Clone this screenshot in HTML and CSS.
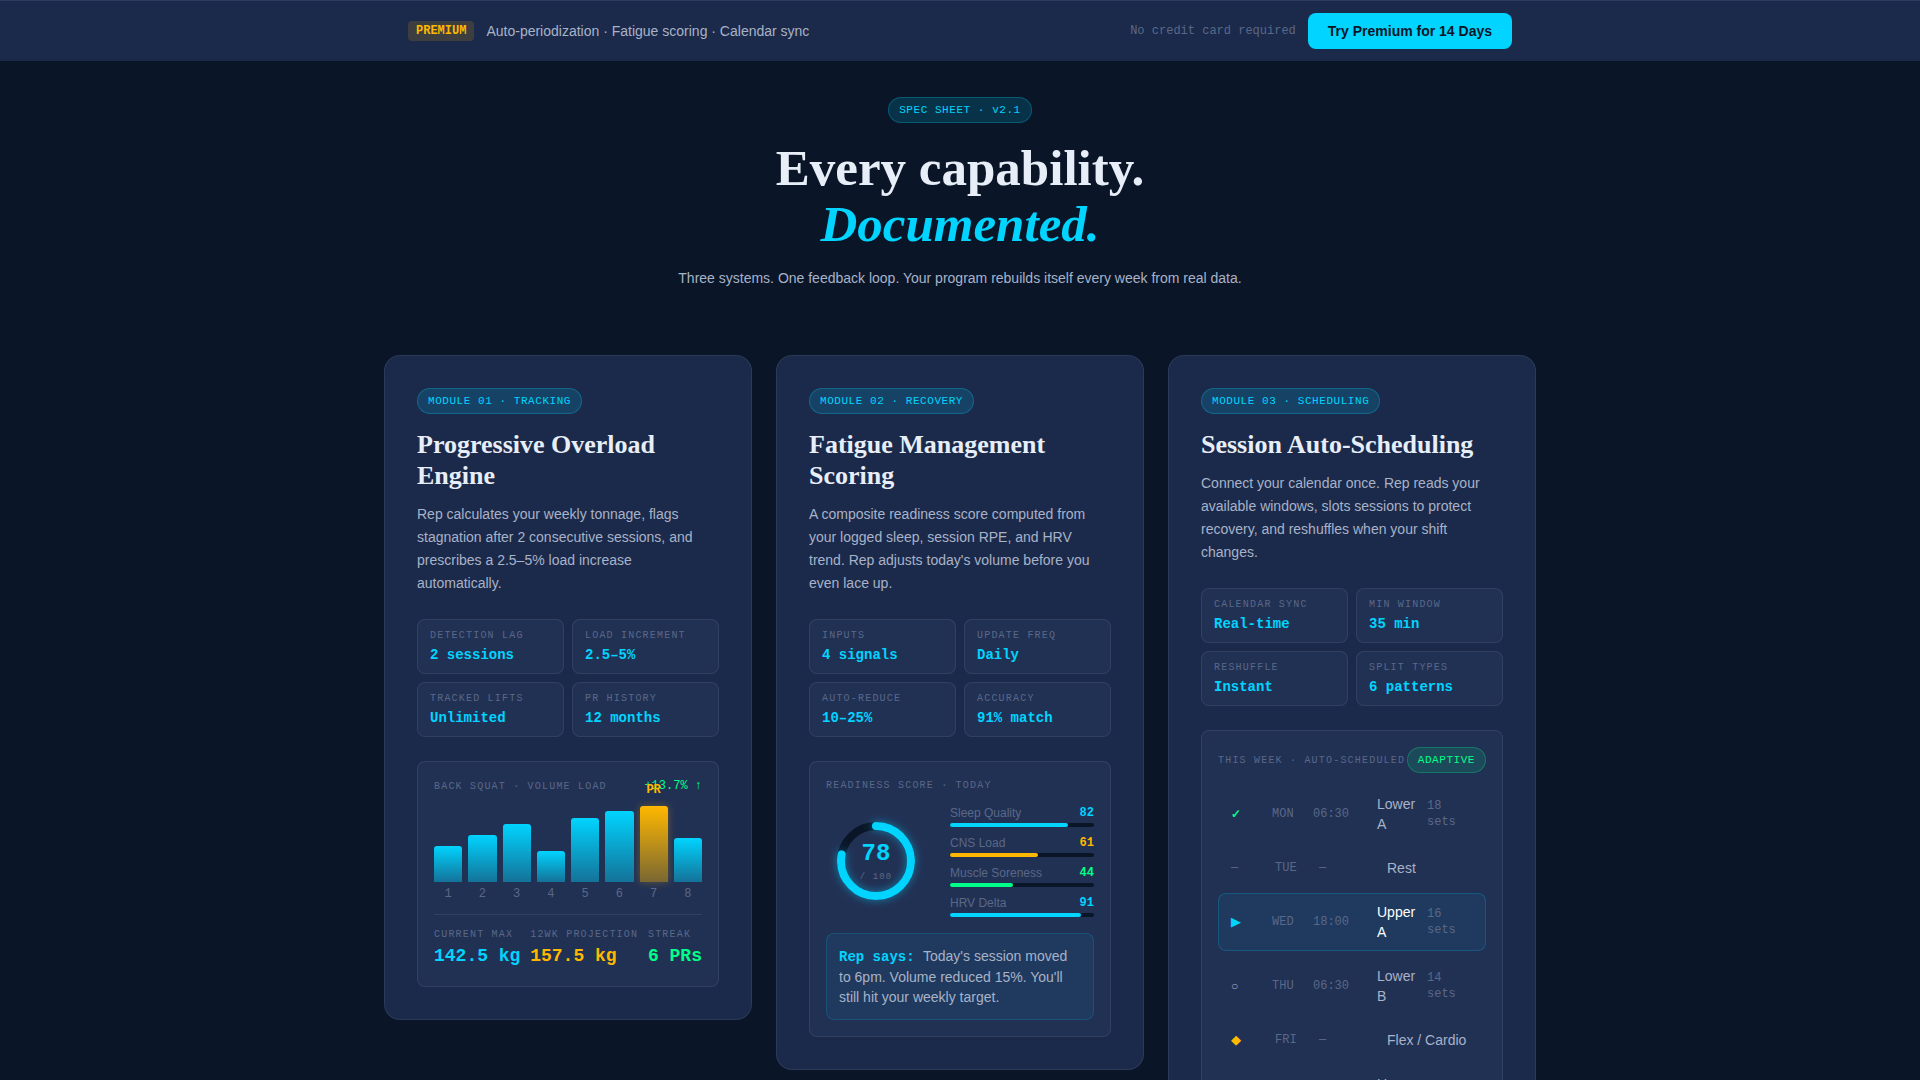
FILE: index.html
```html
<!DOCTYPE html>
<html lang="en">
<head>
<meta charset="utf-8">
<meta name="viewport" content="width=device-width, initial-scale=1">
<title>Rep – Spec Sheet</title>
<link rel="stylesheet" href="styles.css">
</head>
<body>
<header class="promo">
  <div class="promo-inner">
    <div class="promo-group">
      <span class="promo-tag">PREMIUM</span>
      <span class="promo-text">Auto-periodization · Fatigue scoring · Calendar sync</span>
    </div>
    <div class="promo-group">
      <span class="promo-note">No credit card required</span>
      <button class="cta" type="button">Try Premium for 14 Days</button>
    </div>
  </div>
</header>

<main>
  <section class="hero">
    <span class="pill">SPEC SHEET · v2.1</span>
    <h1 class="hero-title">Every capability.<br><em>Documented.</em></h1>
    <p class="hero-text">Three systems. One feedback loop. Your program rebuilds itself every week from real data.</p>
  </section>

  <section class="modules">
    <article class="card">
      <span class="pill">MODULE 01 · TRACKING</span>
      <h2 class="card-title">Progressive Overload Engine</h2>
      <p class="card-text">Rep calculates your weekly tonnage, flags stagnation after 2 consecutive sessions, and prescribes a 2.5–5% load increase automatically.</p>
      <dl class="specs">
        <div class="spec"><dt class="label">DETECTION LAG</dt><dd>2 sessions</dd></div>
        <div class="spec"><dt class="label">LOAD INCREMENT</dt><dd>2.5–5%</dd></div>
        <div class="spec"><dt class="label">TRACKED LIFTS</dt><dd>Unlimited</dd></div>
        <div class="spec"><dt class="label">PR HISTORY</dt><dd>12 months</dd></div>
      </dl>
      <div class="panel">
        <div class="chart-head">
          <span class="label">BACK SQUAT · VOLUME LOAD</span>
          <span class="trend">+13.7% ↑</span>
        </div>
        <div class="chart">
          <div class="bar" style="height:45%"></div>
          <div class="bar" style="height:59%"></div>
          <div class="bar" style="height:72%"></div>
          <div class="bar" style="height:39%"></div>
          <div class="bar" style="height:80%"></div>
          <div class="bar" style="height:89%"></div>
          <div class="bar bar-pr" style="height:95%"><span class="pr">PR</span></div>
          <div class="bar" style="height:55%"></div>
        </div>
        <div class="weeks"><span>1</span><span>2</span><span>3</span><span>4</span><span>5</span><span>6</span><span>7</span><span>8</span></div>
        <dl class="stats">
          <div><dt class="label">CURRENT MAX</dt><dd class="cyan">142.5 kg</dd></div>
          <div><dt class="label">12WK PROJECTION</dt><dd class="amber">157.5 kg</dd></div>
          <div><dt class="label">STREAK</dt><dd class="green">6 PRs</dd></div>
        </dl>
      </div>
    </article>

    <article class="card">
      <span class="pill">MODULE 02 · RECOVERY</span>
      <h2 class="card-title">Fatigue Management Scoring</h2>
      <p class="card-text">A composite readiness score computed from your logged sleep, session RPE, and HRV trend. Rep adjusts today's volume before you even lace up.</p>
      <dl class="specs">
        <div class="spec"><dt class="label">INPUTS</dt><dd>4 signals</dd></div>
        <div class="spec"><dt class="label">UPDATE FREQ</dt><dd>Daily</dd></div>
        <div class="spec"><dt class="label">AUTO-REDUCE</dt><dd>10–25%</dd></div>
        <div class="spec"><dt class="label">ACCURACY</dt><dd>91% match</dd></div>
      </dl>
      <div class="panel">
        <div class="label">READINESS SCORE · TODAY</div>
        <div class="readiness">
          <div class="ring">
            <svg class="ring-svg" viewBox="0 0 100 100" width="100" height="100" aria-hidden="true">
              <circle class="ring-track" cx="50" cy="50" r="35"/>
              <circle class="ring-value" cx="50" cy="50" r="35" pathLength="100" stroke-dasharray="78 100" transform="rotate(-90 50 50)"/>
            </svg>
            <div class="ring-label">
              <span class="score">78</span>
              <span class="score-max">/ 100</span>
            </div>
          </div>
          <ul class="signals">
            <li><div class="signal-row"><span>Sleep Quality</span><b class="cyan">82</b></div><div class="track"><div class="fill fill-cyan" style="width:82%"></div></div></li>
            <li><div class="signal-row"><span>CNS Load</span><b class="amber">61</b></div><div class="track"><div class="fill fill-amber" style="width:61%"></div></div></li>
            <li><div class="signal-row"><span>Muscle Soreness</span><b class="green">44</b></div><div class="track"><div class="fill fill-green" style="width:44%"></div></div></li>
            <li><div class="signal-row"><span>HRV Delta</span><b class="cyan">91</b></div><div class="track"><div class="fill fill-cyan" style="width:91%"></div></div></li>
          </ul>
        </div>
        <p class="advice"><strong>Rep says: </strong>Today's session moved to 6pm. Volume reduced 15%. You'll still hit your weekly target.</p>
      </div>
    </article>

    <article class="card">
      <span class="pill">MODULE 03 · SCHEDULING</span>
      <h2 class="card-title">Session Auto-Scheduling</h2>
      <p class="card-text">Connect your calendar once. Rep reads your available windows, slots sessions to protect recovery, and reshuffles when your shift changes.</p>
      <dl class="specs">
        <div class="spec"><dt class="label">CALENDAR SYNC</dt><dd>Real-time</dd></div>
        <div class="spec"><dt class="label">MIN WINDOW</dt><dd>35 min</dd></div>
        <div class="spec"><dt class="label">RESHUFFLE</dt><dd>Instant</dd></div>
        <div class="spec"><dt class="label">SPLIT TYPES</dt><dd>6 patterns</dd></div>
      </dl>
      <div class="panel">
        <div class="week-head">
          <span class="label">THIS WEEK · AUTO-SCHEDULED</span>
          <span class="pill pill-green">ADAPTIVE</span>
        </div>
        <ol class="week">
          <li class="day"><span class="icon icon-done">✓</span><span>MON</span><span>06:30</span><span class="name">Lower A</span><span class="sets">18 sets</span></li>
          <li class="day day-off"><span>—</span><span>TUE</span><span>—</span><span class="name">Rest</span></li>
          <li class="day day-now"><span class="icon cyan">▶</span><span>WED</span><span>18:00</span><span class="name">Upper A</span><span class="sets">16 sets</span></li>
          <li class="day"><span class="icon icon-open">○</span><span>THU</span><span>06:30</span><span class="name">Lower B</span><span class="sets">14 sets</span></li>
          <li class="day day-off"><span class="icon amber">◆</span><span>FRI</span><span>—</span><span class="name">Flex / Cardio</span></li>
          <li class="day"><span class="icon icon-open">○</span><span>SAT</span><span>09:00</span><span class="name">Upper B</span><span class="sets">16 sets</span></li>
          <li class="day day-off"><span>—</span><span>SUN</span><span>—</span><span class="name">Rest</span></li>
        </ol>
      </div>
    </article>
  </section>
</main>
</body>
</html>
```
FILE: styles.css
```css
:root {
  --bg: #0a1628;
  --surface: #1b2a4a;
  --inset: #213154;
  --line: rgba(255, 255, 255, 0.08);
  --cyan: #00d4ff;
  --amber: #ffb800;
  --green: #00ff88;
  --text: #e8eef8;
  --soft: #a8b2c8;
  --muted: #5a6888;
  --sans: "Liberation Sans", Arial, sans-serif;
  --serif: "Liberation Serif", "Times New Roman", serif;
  --mono: "Liberation Mono", "Courier New", monospace;
}

* { box-sizing: border-box; margin: 0; padding: 0; }

body {
  background: var(--bg);
  color: var(--soft);
  font: 14px/20px var(--sans);
}

ul, ol { list-style: none; }

.cyan { color: var(--cyan); }
.amber { color: var(--amber); }
.green { color: var(--green); }

/* Promo bar */
.promo {
  background: var(--surface);
  border-top: 1px solid #2b3d5f;
  padding: 12px 24px;
}
.promo-inner {
  max-width: 1104px;
  margin: 0 auto;
  display: flex;
  justify-content: space-between;
  align-items: center;
}
.promo-group { display: flex; align-items: center; gap: 12px; }
.promo-tag {
  padding: 2px 8px;
  border-radius: 4px;
  background: rgba(255, 184, 0, 0.15);
  color: var(--amber);
  font: bold 12px/16px var(--mono);
}
.promo-note { font: 12px/16px var(--mono); color: var(--muted); }
.cta {
  height: 36px;
  padding: 0 20px;
  border: 0;
  border-radius: 8px;
  background: var(--cyan);
  color: var(--bg);
  font: bold 14px/20px var(--sans);
  cursor: pointer;
}

/* Hero */
.hero {
  display: flex;
  flex-direction: column;
  align-items: center;
  gap: 17px;
  padding: 36px 24px 68px;
  text-align: center;
}
.pill {
  padding: 4px 10px;
  border: 1px solid rgba(0, 212, 255, 0.25);
  border-radius: 16px;
  background: rgba(0, 212, 255, 0.15);
  color: var(--cyan);
  font: 11px/16px var(--mono);
  letter-spacing: 0.05em;
  white-space: nowrap;
}
.pill-green {
  border-color: rgba(0, 255, 136, 0.25);
  background: rgba(0, 255, 136, 0.12);
  color: var(--green);
}
.hero-title { font: bold 51px/56px var(--serif); color: var(--text); }
.hero-title em { color: var(--cyan); }
.hero-text { line-height: 18px; }

/* Module cards */
.modules {
  max-width: 1152px;
  margin: 0 auto;
  padding-bottom: 64px;
  display: grid;
  grid-template-columns: repeat(3, minmax(0, 1fr));
  gap: 24px;
  align-items: start;
}
.card {
  display: flex;
  flex-direction: column;
  align-items: stretch;
  padding: 32px;
  border: 1px solid var(--line);
  border-radius: 16px;
  background: var(--surface);
}
.card > .pill { align-self: flex-start; }
.card-title {
  margin-top: 15px;
  font: bold 26px/31px var(--serif);
  color: var(--text);
}
.card-text { margin-top: 12px; line-height: 23px; }

.label {
  font: 10px/15px var(--mono);
  letter-spacing: 0.12em;
  color: var(--muted);
  white-space: nowrap;
}
.specs {
  margin-top: 24px;
  display: grid;
  grid-template-columns: 1fr 1fr;
  gap: 8px;
}
.spec {
  padding: 8px 12px;
  border: 1px solid var(--line);
  border-radius: 8px;
  background: var(--inset);
}
.spec dd {
  margin-top: 2px;
  font: bold 14px/20px var(--mono);
  color: var(--cyan);
}
.panel {
  margin-top: 24px;
  padding: 16px;
  border: 1px solid var(--line);
  border-radius: 8px;
  background: var(--inset);
}

/* Volume chart */
.chart-head {
  display: flex;
  justify-content: space-between;
  align-items: center;
}
.trend { font: 12px/16px var(--mono); color: var(--green); }
.chart {
  height: 80px;
  margin-top: 8px;
  display: flex;
  align-items: flex-end;
  gap: 6px;
}
.bar {
  flex: 1;
  border-radius: 3px 3px 0 0;
  background: linear-gradient(to bottom, var(--cyan), rgba(0, 212, 255, 0.4));
}
.bar-pr {
  position: relative;
  background: linear-gradient(to bottom, var(--amber), rgba(255, 184, 0, 0.4));
  box-shadow: 0 0 8px rgba(255, 184, 0, 0.3);
}
.pr {
  position: absolute;
  bottom: 100%;
  left: 0;
  right: 0;
  padding-bottom: 8px;
  text-align: center;
  font: bold 12px/16px var(--mono);
  color: var(--amber);
}
.weeks {
  margin-top: 4px;
  display: flex;
  gap: 6px;
  font: 12px/16px var(--mono);
  color: var(--muted);
}
.weeks span { flex: 1; text-align: center; }
.stats {
  margin-top: 12px;
  padding-top: 12px;
  border-top: 1px solid var(--line);
  display: flex;
  justify-content: space-between;
}
.stats dd { font: bold 18px/28px var(--mono); }

/* Readiness */
.readiness {
  margin-top: 12px;
  display: grid;
  grid-template-columns: 100px 1fr;
  gap: 24px;
  align-items: center;
}
.ring { position: relative; height: 100px; }
.ring-svg { display: block; overflow: visible; }
.ring-svg circle { fill: none; stroke-width: 8; }
.ring-track { stroke: var(--bg); }
.ring-value {
  stroke: var(--cyan);
  stroke-linecap: round;
  filter: drop-shadow(0 0 4px rgba(0, 212, 255, 0.5));
}
.ring-label {
  position: absolute;
  inset: 0;
  display: flex;
  flex-direction: column;
  align-items: center;
  justify-content: center;
}
.score { font: bold 24px/32px var(--mono); color: var(--cyan); }
.score-max { font: 9px/14px var(--mono); letter-spacing: 0.12em; color: var(--muted); }
.signals { display: grid; gap: 8px; }
.signal-row {
  display: flex;
  justify-content: space-between;
  font-size: 12px;
  line-height: 16px;
  color: var(--muted);
}
.signal-row b { font-family: var(--mono); }
.track {
  height: 4px;
  margin-top: 2px;
  border-radius: 2px;
  background: var(--bg);
}
.fill { height: 4px; border-radius: 2px; }
.fill-cyan { background: var(--cyan); }
.fill-amber { background: var(--amber); }
.fill-green { background: var(--green); }
.advice {
  margin-top: 16px;
  padding: 12px;
  border: 1px solid rgba(0, 212, 255, 0.15);
  border-radius: 8px;
  background: rgba(0, 212, 255, 0.06);
}
.advice strong { font-family: var(--mono); color: var(--cyan); }

/* Weekly schedule */
.week-head {
  display: flex;
  justify-content: space-between;
  align-items: center;
}
.week {
  margin-top: 12px;
  display: grid;
  gap: 6px;
}
.day {
  display: grid;
  grid-template-columns: 29px 29px 52px 38px 1fr;
  column-gap: 12px;
  align-items: center;
  padding: 8px 12px;
  border: 1px solid transparent;
  border-radius: 8px;
  font: 12px/16px var(--mono);
  color: var(--muted);
}
.day-off { grid-template-columns: 32px 32px 56px 1fr; }
.day-now {
  border-color: rgba(0, 212, 255, 0.2);
  background: rgba(0, 212, 255, 0.06);
}
.icon { font: 13px/16px var(--sans); }
.icon-done { font-size: 12px; font-weight: bold; color: var(--green); }
.icon-open { font-size: 12px; color: var(--soft); }
.name { font: 14px/20px var(--sans); color: var(--soft); }
.day-now .name { color: #ffffff; }
```
